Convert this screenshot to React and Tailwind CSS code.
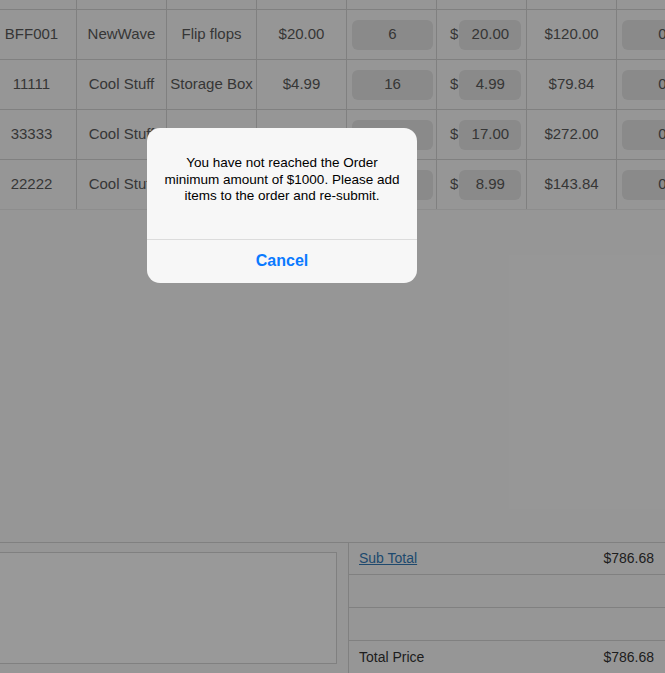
import React from 'react'

const headers = ['Item Code', 'Brand', 'Description', 'Price', 'Units', 'Order Price', 'Total', 'Discount']

const rows = [
  { code: 'BFF001', brand: 'NewWave', desc: 'Flip flops', price: '$20.00', qty: '6', unit: '20.00', total: '$120.00', disc: '0' },
  { code: '11111', brand: 'Cool Stuff', desc: 'Storage Box', price: '$4.99', qty: '16', unit: '4.99', total: '$79.84', disc: '0' },
  { code: '33333', brand: 'Cool Stuff', desc: 'Sunglasses', price: '$17.00', qty: '16', unit: '17.00', total: '$272.00', disc: '0' },
  { code: '22222', brand: 'Cool Stuff', desc: 'Beach Towel', price: '$8.99', qty: '16', unit: '8.99', total: '$143.84', disc: '0' },
]

const cell = 'w-[90px] shrink-0 border-r border-[#d5d5d5] flex items-center'

function Box({ children, w }) {
  return (
    <div className={`${w} h-[30px] rounded-[6px] bg-[#e6e6e6] flex items-center justify-center`}>
      {children}
    </div>
  )
}

export default function App() {
  return (
    <div
      className="relative h-screen overflow-hidden bg-[#fbfbfb] text-[#5a5a5a] flex flex-col"
      style={{ fontFamily: '"Liberation Sans", Arial, sans-serif' }}
    >
      {/* order lines */}
      <div className="-ml-[13px] -mt-[30px] w-[720px]">
        <div className="flex h-[40px] border-b border-[#d5d5d5]">
          {headers.map((h) => (
            <div key={h} className={`${cell} items-end justify-center pb-[10px] text-[15px] leading-[17px] text-[#555]`}>
              {h}
            </div>
          ))}
        </div>
        {rows.map((r, i) => (
          <div
            key={r.code}
            className={`flex h-[50px] border-b text-[15px] ${i === rows.length - 1 ? 'border-[#ececec]' : 'border-[#d5d5d5]'}`}
          >
            <div className={`${cell} justify-center`}>{r.code}</div>
            <div className={`${cell} justify-center`}>{r.brand}</div>
            <div className={`${cell} justify-center whitespace-nowrap`}>{r.desc}</div>
            <div className={`${cell} justify-center`}>{r.price}</div>
            <div className={`${cell} pl-[5px]`}>
              <Box w="w-[81px]">{r.qty}</Box>
            </div>
            <div className={`${cell} pl-[13px] gap-[1px]`}>
              <span>$</span>
              <Box w="w-[62px]">{r.unit}</Box>
            </div>
            <div className={`${cell} justify-center`}>{r.total}</div>
            <div className={`${cell} pl-[5px]`}>
              <Box w="w-[81px]">{r.disc}</Box>
            </div>
          </div>
        ))}
      </div>

      <div className="flex-1" />

      {/* totals */}
      <div className="h-[131px] border-t border-[#d5d5d5] flex text-[14px]">
        <div className="w-[348px] shrink-0 pt-[9px] pr-[11px]">
          <div className="-ml-px h-[112px] border border-[#d5d5d5] bg-white" />
        </div>
        <div className="flex-1 border-l border-[#d5d5d5] flex flex-col">
          <div className="h-[32px] border-b border-[#d5d5d5] flex items-center justify-between pl-[10px] pr-[11px]">
            <a className="text-[#337ab7] underline">Sub Total</a>
            <span className="text-[#333]">$786.68</span>
          </div>
          <div className="h-[33px] border-b border-[#d5d5d5]" />
          <div className="h-[34px] border-b border-[#d5d5d5]" />
          <div className="h-[32px] flex items-center justify-between pl-[10px] pr-[11px] text-[#333]">
            <span>Total Price</span>
            <span>$786.68</span>
          </div>
        </div>
      </div>

      {/* alert */}
      <div className="absolute inset-0 bg-black/40">
        <div className="absolute left-[147px] top-[128px] w-[270px] rounded-[13px] bg-[#f7f7f7] overflow-hidden">
          <div className="pt-[27px] pb-[34px] px-[16px] text-center text-[13.5px] leading-[16.5px] text-black">
            You have not reached the Order minimum amount of $1000. Please add items to the order and re-submit.
          </div>
          <div className="h-[44px] border-t border-[#dcdcdc] flex items-center justify-center text-[16px] font-bold text-[#0a7aff]">
            Cancel
          </div>
        </div>
      </div>
    </div>
  )
}
